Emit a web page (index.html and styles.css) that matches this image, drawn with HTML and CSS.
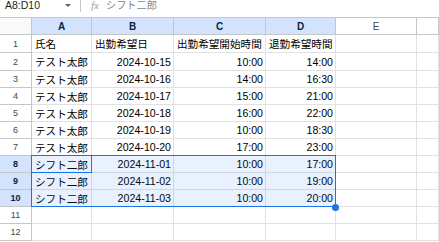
FILE: index.html
```html
<!DOCTYPE html>
<html lang="ja">
<head>
<meta charset="utf-8">
<link rel="stylesheet" href="styles.css">
</head>
<body>
<div class="topbar">
  <div class="namebox">A8:D10</div>
  <div class="caret"></div>
  <div class="sep"></div>
  <div class="fx">fx</div>
  <div class="formula">シフト二郎</div>
</div>
<div class="sheet">
  <div class="corner"></div>
  <div class="ch on">A</div><div class="ch on">B</div><div class="ch on">C</div><div class="ch on">D</div><div class="ch">E</div><div class="ch last"></div>

  <div class="rh">1</div><div class="c">氏名</div><div class="c">出勤希望日</div><div class="c">出勤希望開始時間</div><div class="c">退勤希望時間</div><div class="c"></div><div class="c"></div>
  <div class="rh">2</div><div class="c">テスト太郎</div><div class="c r">2024-10-15</div><div class="c r">10:00</div><div class="c r">14:00</div><div class="c"></div><div class="c"></div>
  <div class="rh">3</div><div class="c">テスト太郎</div><div class="c r">2024-10-16</div><div class="c r">14:00</div><div class="c r">16:30</div><div class="c"></div><div class="c"></div>
  <div class="rh">4</div><div class="c">テスト太郎</div><div class="c r">2024-10-17</div><div class="c r">15:00</div><div class="c r">21:00</div><div class="c"></div><div class="c"></div>
  <div class="rh">5</div><div class="c">テスト太郎</div><div class="c r">2024-10-18</div><div class="c r">16:00</div><div class="c r">22:00</div><div class="c"></div><div class="c"></div>
  <div class="rh">6</div><div class="c">テスト太郎</div><div class="c r">2024-10-19</div><div class="c r">10:00</div><div class="c r">18:30</div><div class="c"></div><div class="c"></div>
  <div class="rh">7</div><div class="c">テスト太郎</div><div class="c r">2024-10-20</div><div class="c r">17:00</div><div class="c r">23:00</div><div class="c"></div><div class="c"></div>
  <div class="rh on">8</div><div class="c">シフト二郎</div><div class="c r">2024-11-01</div><div class="c r">10:00</div><div class="c r">17:00</div><div class="c"></div><div class="c"></div>
  <div class="rh on">9</div><div class="c">シフト二郎</div><div class="c r">2024-11-02</div><div class="c r">10:00</div><div class="c r">19:00</div><div class="c"></div><div class="c"></div>
  <div class="rh on">10</div><div class="c">シフト二郎</div><div class="c r">2024-11-03</div><div class="c r">10:00</div><div class="c r">20:00</div><div class="c"></div><div class="c"></div>
  <div class="rh">11</div><div class="c"></div><div class="c"></div><div class="c"></div><div class="c"></div><div class="c"></div><div class="c"></div>
  <div class="rh">12</div><div class="c"></div><div class="c"></div><div class="c"></div><div class="c"></div><div class="c"></div><div class="c"></div>

  <div class="selection"></div>
  <div class="active"></div>
  <div class="handle"></div>
</div>
</body>
</html>
```
FILE: styles.css
```css
html, body {
  margin: 0;
  padding: 0;
  background: #ffffff;
  overflow: hidden;
}
body {
  width: 439px;
  height: 242px;
  font-family: "Liberation Sans", "Noto Sans CJK JP", sans-serif;
  color: #000;
}
.topbar {
  height: 18px;
  box-sizing: border-box;
  border-bottom: 1px solid #c4c7c5;
  display: flex;
  align-items: flex-start;
}
.namebox {
  font-size: 10.5px;
  line-height: 11px;
  color: #1f1f1f;
  margin-left: 5px;
  width: 56px;
}
.caret {
  width: 0;
  height: 0;
  border-left: 3px solid transparent;
  border-right: 3px solid transparent;
  border-top: 3px solid #5f6368;
  margin-top: 4px;
  margin-left: 4px;
}
.sep {
  width: 1px;
  height: 12px;
  background: #c7c7c7;
  margin-left: 9px;
}
.fx {
  font-family: "Liberation Serif", serif;
  font-style: italic;
  font-size: 11px;
  line-height: 11px;
  color: #9aa0a6;
  margin-left: 10px;
}
.formula {
  font-size: 10.2px;
  line-height: 11px;
  color: #80868b;
  margin-left: 7px;
}
.sheet {
  position: relative;
  display: grid;
  grid-template-columns: 32px 60px 82px 92px 70px 81px 22px;
  grid-template-rows: 17px 18px 18px repeat(10, 17px);
  font-size: 10.6px;
}
.sheet > div {
  box-sizing: border-box;
  border-right: 1px solid #e1e1e1;
  border-bottom: 1px solid #e1e1e1;
  white-space: nowrap;
  overflow: hidden;
}
.sheet > .corner {
  background: #f8f9fa;
  border-right: 1px solid #c4c7c5;
  border-bottom: 1px solid #c4c7c5;
}
.sheet > .ch {
  display: flex;
  align-items: center;
  justify-content: center;
  font-size: 10px;
  color: #444746;
  border-right: 1px solid #c4c7c5;
  border-bottom: 1px solid #c4c7c5;
  background: #ffffff;
}
.sheet > .ch.on {
  background: #d3e3fd;
  color: #0b1f44;
  font-weight: bold;
}
.sheet > .rh {
  display: flex;
  align-items: center;
  justify-content: center;
  font-size: 9px;
  color: #444746;
  border-right: 1px solid #c4c7c5;
  border-bottom: 1px solid #c4c7c5;
}
.sheet > .rh.on {
  background: #d3e3fd;
  color: #0b1f44;
  font-weight: bold;
}
.sheet > .c {
  display: flex;
  align-items: center;
  padding: 0 3px;
  color: #000;
}
.sheet > .c.r {
  justify-content: flex-end;
  padding-right: 2px;
}
.sheet > .selection {
  position: absolute;
  left: 31px;
  top: 137px;
  width: 305px;
  height: 52px;
  border: 1px solid #1a73e8;
  background: rgba(26, 115, 232, 0.1);
  pointer-events: none;
}
.sheet > .active {
  position: absolute;
  left: 31px;
  top: 137px;
  width: 61px;
  height: 18px;
  border: 1px solid #1a73e8;
  background: transparent;
  pointer-events: none;
}
.sheet > .handle {
  position: absolute;
  left: 332px;
  top: 186px;
  width: 7px;
  height: 7px;
  border: none;
  border-radius: 50%;
  background: #1a73e8;
}
```
